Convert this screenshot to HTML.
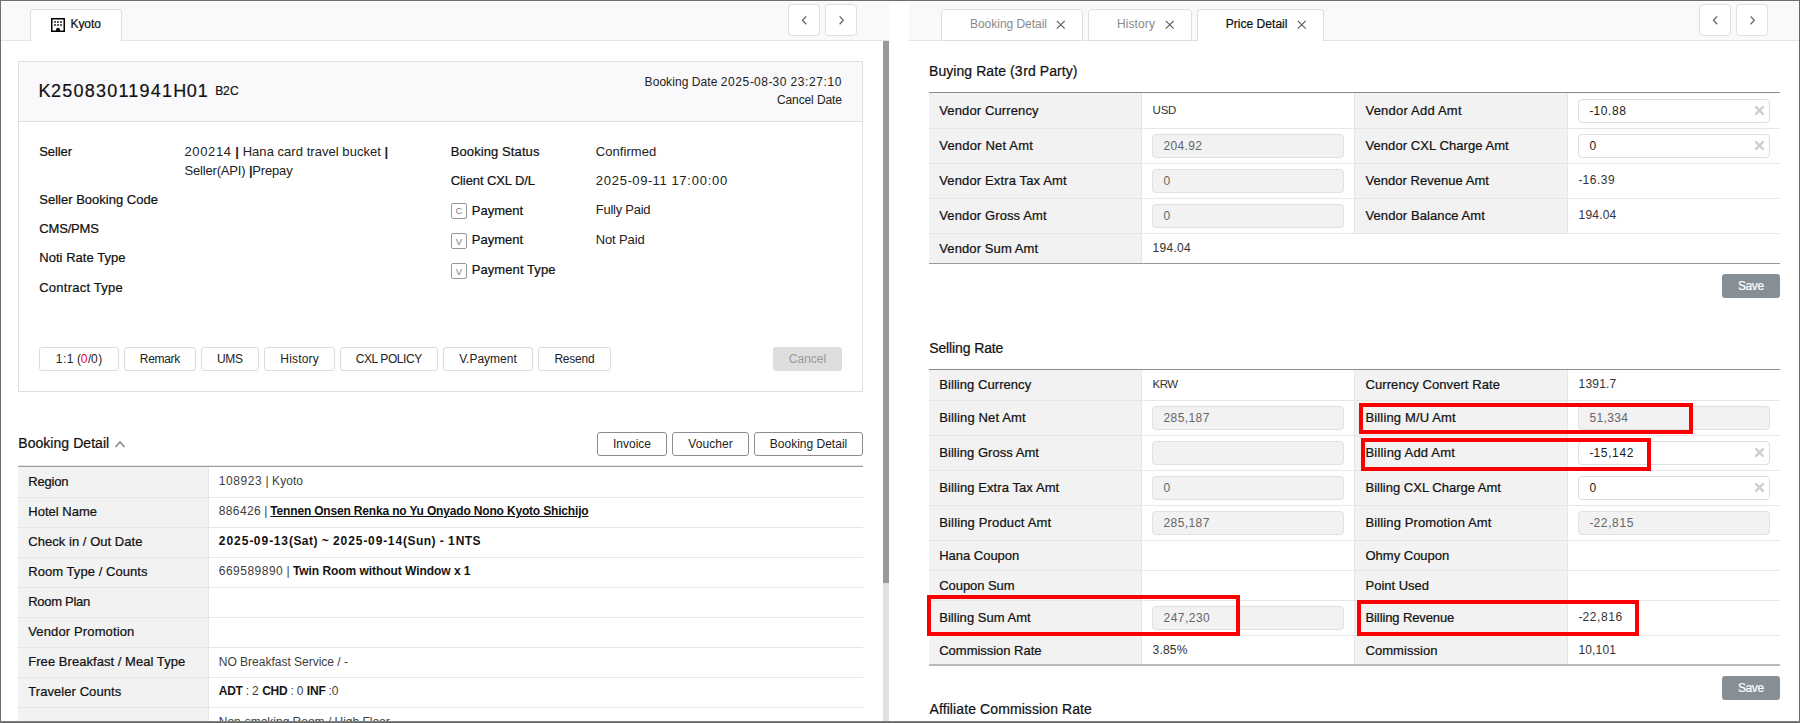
<!DOCTYPE html>
<html lang="en"><head><meta charset="utf-8"><title>Booking - Price Detail</title>
<style>
html,body{margin:0;padding:0}
body{width:1800px;height:723px;overflow:hidden;background:#fff;position:relative;font-family:"Liberation Sans",sans-serif;}
#app{position:absolute;left:0;top:0;width:1800px;height:723px;overflow:hidden;background:#fff}
#app div,#app svg.ab{position:absolute;display:block}
#app div.bx{box-sizing:border-box}
#app .t{position:absolute;white-space:nowrap;line-height:20px;height:20px}
#app .m{-webkit-text-stroke:0.22px currentColor}
#app .t{--ls:0px;letter-spacing:var(--ls)}
#app .t i{font-style:normal;letter-spacing:calc(var(--ls) + 0.045em)}
#app b{font-weight:700}
#app b.k{color:#151515}
#app b.u{text-decoration:underline;color:#111}
</style></head><body>
<div id="app">
<div class="bx" style="left:1px;top:2px;width:888px;height:39px;background:#f9f8fa;border-bottom:1px solid #e3e3e3"></div>
<div class="bx" style="left:909px;top:2px;width:890px;height:39px;background:#f9f8fa;border-bottom:1px solid #e3e3e3"></div>
<div class="bx" style="left:30px;top:9px;width:92px;height:32px;background:#fff;border:1px solid #dedede;border-bottom:none;border-radius:4px 4px 0 0"></div>
<svg class="ab" style="left:51px;top:18px" width="14" height="14" viewBox="0 0 14 14">
<rect x="0.75" y="0.75" width="12.5" height="12.5" fill="#fff" stroke="#000" stroke-width="1.5"/>
<g fill="#000"><rect x="3.2" y="3.2" width="1.6" height="1.6"/><rect x="6.2" y="3.2" width="1.6" height="1.6"/><rect x="9.2" y="3.2" width="1.6" height="1.6"/>
<rect x="3.2" y="6.2" width="1.6" height="1.6"/><rect x="6.2" y="6.2" width="1.6" height="1.6"/><rect x="9.2" y="6.2" width="1.6" height="1.6"/>
<path d="M5.1 13 V11.7 a1.9 1.9 0 0 1 3.8 0 V13 Z"/></g></svg>
<div class="bx" style="left:788px;top:4px;width:32px;height:32px;background:#fff;border:1px solid #dfdfdf;border-radius:4px"><svg class="ab" style="left:11px;top:9.5px" width="9" height="11" viewBox="0 0 9 11"><path d="M6.2 1.4 L2.5 5.3 L6.2 9.2" fill="none" stroke="#666" stroke-width="1.3"/></svg></div>
<div class="bx" style="left:825px;top:4px;width:32px;height:32px;background:#fff;border:1px solid #dfdfdf;border-radius:4px"><svg class="ab" style="left:11px;top:9.5px" width="9" height="11" viewBox="0 0 9 11"><path d="M2.6 1.4 L6.3 5.3 L2.6 9.2" fill="none" stroke="#666" stroke-width="1.3"/></svg></div>
<div class="bx" style="left:1699px;top:4px;width:32px;height:32px;background:#fff;border:1px solid #dfdfdf;border-radius:4px"><svg class="ab" style="left:11px;top:9.5px" width="9" height="11" viewBox="0 0 9 11"><path d="M6.2 1.4 L2.5 5.3 L6.2 9.2" fill="none" stroke="#666" stroke-width="1.3"/></svg></div>
<div class="bx" style="left:1736px;top:4px;width:32px;height:32px;background:#fff;border:1px solid #dfdfdf;border-radius:4px"><svg class="ab" style="left:11px;top:9.5px" width="9" height="11" viewBox="0 0 9 11"><path d="M2.6 1.4 L6.3 5.3 L2.6 9.2" fill="none" stroke="#666" stroke-width="1.3"/></svg></div>
<div class="" style="left:883px;top:41px;width:6px;height:542px;background:#999"></div>
<div class="" style="left:883px;top:583px;width:6px;height:140px;background:#e0e0e0"></div>
<div class="bx" style="left:18px;top:61px;width:845px;height:331px;background:#fff;border:1px solid #dfdfdf"></div>
<div class="bx" style="left:19px;top:62px;width:843px;height:60px;background:#f9f8fa;border-bottom:1px solid #dfdfdf"></div>
<div class="bx" style="left:451px;top:203px;width:16px;height:16px;background:#fff;border:1px solid #999;border-radius:2px"></div>
<div class="bx" style="left:451px;top:233px;width:16px;height:16px;background:#fff;border:1px solid #999;border-radius:2px"></div>
<div class="bx" style="left:451px;top:263px;width:16px;height:16px;background:#fff;border:1px solid #999;border-radius:2px"></div>
<div class="bx" style="left:39px;top:347px;width:80px;height:24px;background:#fff;border:1px solid #dcdcdc;border-radius:3px"></div>
<div class="bx" style="left:124px;top:347px;width:72px;height:24px;background:#fff;border:1px solid #dcdcdc;border-radius:3px"></div>
<div class="bx" style="left:201px;top:347px;width:58px;height:24px;background:#fff;border:1px solid #dcdcdc;border-radius:3px"></div>
<div class="bx" style="left:264px;top:347px;width:71px;height:24px;background:#fff;border:1px solid #dcdcdc;border-radius:3px"></div>
<div class="bx" style="left:340px;top:347px;width:98px;height:24px;background:#fff;border:1px solid #dcdcdc;border-radius:3px"></div>
<div class="bx" style="left:443px;top:347px;width:90px;height:24px;background:#fff;border:1px solid #dcdcdc;border-radius:3px"></div>
<div class="bx" style="left:538px;top:347px;width:73px;height:24px;background:#fff;border:1px solid #dcdcdc;border-radius:3px"></div>
<div class="bx" style="left:773px;top:347px;width:69px;height:24px;background:#dedede;border-radius:3px"></div>
<svg class="ab" style="left:114px;top:439px" width="12" height="10" viewBox="0 0 12 10"><path d="M1.5 8 L6 3 L10.5 8" fill="none" stroke="#8a8a8a" stroke-width="1.6"/></svg>
<div class="bx" style="left:597px;top:432px;width:70px;height:24px;background:#fff;border:1px solid #8e8e8e;border-radius:3px"></div>
<div class="bx" style="left:672px;top:432px;width:77px;height:24px;background:#fff;border:1px solid #8e8e8e;border-radius:3px"></div>
<div class="bx" style="left:754px;top:432px;width:109px;height:24px;background:#fff;border:1px solid #8e8e8e;border-radius:3px"></div>
<div class="" style="left:18px;top:465px;width:845px;height:1px;background:#e4e4e4"></div>
<div class="" style="left:18px;top:466px;width:845px;height:1px;background:#9d9d9d"></div>
<div class="" style="left:18px;top:467px;width:190px;height:256px;background:#f2f2f2"></div>
<div class="" style="left:208px;top:467px;width:1px;height:256px;background:#e6e6e6"></div>
<div class="" style="left:18px;top:497px;width:845px;height:1px;background:#e6e6e6"></div>
<div class="" style="left:18px;top:527px;width:845px;height:1px;background:#e6e6e6"></div>
<div class="" style="left:18px;top:557px;width:845px;height:1px;background:#e6e6e6"></div>
<div class="" style="left:18px;top:587px;width:845px;height:1px;background:#e6e6e6"></div>
<div class="" style="left:18px;top:617px;width:845px;height:1px;background:#e6e6e6"></div>
<div class="" style="left:18px;top:647px;width:845px;height:1px;background:#e6e6e6"></div>
<div class="" style="left:18px;top:677px;width:845px;height:1px;background:#e6e6e6"></div>
<div class="" style="left:18px;top:707px;width:845px;height:1px;background:#e6e6e6"></div>
<div class="bx" style="left:941px;top:9px;width:142px;height:32px;background:#fff;border:1px solid #dedede;border-radius:4px 4px 0 0"></div>
<div class="bx" style="left:1088px;top:9px;width:104px;height:32px;background:#fff;border:1px solid #dedede;border-radius:4px 4px 0 0"></div>
<div class="bx" style="left:1197px;top:9px;width:127px;height:32px;background:#fff;border:1px solid #dedede;border-radius:4px 4px 0 0;border-bottom:none"></div>
<svg class="ab" style="left:1056.25px;top:20.25px" width="9.5" height="9.5" viewBox="0 0 9.5 9.5"><path d="M0.8 0.8 L8.7 8.7 M8.7 0.8 L0.8 8.7" fill="none" stroke="#555" stroke-width="1.05"/></svg>
<svg class="ab" style="left:1165.25px;top:20.25px" width="9.5" height="9.5" viewBox="0 0 9.5 9.5"><path d="M0.8 0.8 L8.7 8.7 M8.7 0.8 L0.8 8.7" fill="none" stroke="#555" stroke-width="1.05"/></svg>
<svg class="ab" style="left:1297.25px;top:20.25px" width="9.5" height="9.5" viewBox="0 0 9.5 9.5"><path d="M0.8 0.8 L8.7 8.7 M8.7 0.8 L0.8 8.7" fill="none" stroke="#555" stroke-width="1.05"/></svg>
<div class="" style="left:929px;top:92px;width:851px;height:1px;background:#8b8b8b"></div>
<div class="" style="left:929px;top:93px;width:212px;height:35px;background:#f2f2f2"></div>
<div class="" style="left:1141px;top:93px;width:1px;height:35px;background:#e6e6e6"></div>
<div class="" style="left:1355px;top:93px;width:212px;height:35px;background:#f2f2f2"></div>
<div class="" style="left:1567px;top:93px;width:1px;height:35px;background:#e6e6e6"></div>
<div class="" style="left:1354px;top:93px;width:1px;height:35px;background:#e6e6e6"></div>
<div class="bx" style="left:1578px;top:98.5px;width:192px;height:24.0px;background:#fff;border:1px solid #dedede;border-radius:4px"></div>
<svg class="ab" style="left:1753.6px;top:104.8px" width="11" height="11" viewBox="0 0 11 11"><path d="M1.4 1.4 L9.6 9.6 M9.6 1.4 L1.4 9.6" fill="none" stroke="#cdcdcd" stroke-width="2.2"/></svg>
<div class="" style="left:929px;top:128px;width:851px;height:1px;background:#e6e6e6"></div>
<div class="" style="left:929px;top:129px;width:212px;height:34px;background:#f2f2f2"></div>
<div class="" style="left:1141px;top:129px;width:1px;height:34px;background:#e6e6e6"></div>
<div class="bx" style="left:1152px;top:134.0px;width:192px;height:24.0px;background:#f2f2f2;border:1px solid #e0e0e0;border-radius:4px"></div>
<div class="" style="left:1355px;top:129px;width:212px;height:34px;background:#f2f2f2"></div>
<div class="" style="left:1567px;top:129px;width:1px;height:34px;background:#e6e6e6"></div>
<div class="" style="left:1354px;top:129px;width:1px;height:34px;background:#e6e6e6"></div>
<div class="bx" style="left:1578px;top:134.0px;width:192px;height:24.0px;background:#fff;border:1px solid #dedede;border-radius:4px"></div>
<svg class="ab" style="left:1753.6px;top:140.3px" width="11" height="11" viewBox="0 0 11 11"><path d="M1.4 1.4 L9.6 9.6 M9.6 1.4 L1.4 9.6" fill="none" stroke="#cdcdcd" stroke-width="2.2"/></svg>
<div class="" style="left:929px;top:163px;width:851px;height:1px;background:#e6e6e6"></div>
<div class="" style="left:929px;top:164px;width:212px;height:34px;background:#f2f2f2"></div>
<div class="" style="left:1141px;top:164px;width:1px;height:34px;background:#e6e6e6"></div>
<div class="bx" style="left:1152px;top:169.0px;width:192px;height:24.0px;background:#f2f2f2;border:1px solid #e0e0e0;border-radius:4px"></div>
<div class="" style="left:1355px;top:164px;width:212px;height:34px;background:#f2f2f2"></div>
<div class="" style="left:1567px;top:164px;width:1px;height:34px;background:#e6e6e6"></div>
<div class="" style="left:1354px;top:164px;width:1px;height:34px;background:#e6e6e6"></div>
<div class="" style="left:929px;top:198px;width:851px;height:1px;background:#e6e6e6"></div>
<div class="" style="left:929px;top:199px;width:212px;height:34px;background:#f2f2f2"></div>
<div class="" style="left:1141px;top:199px;width:1px;height:34px;background:#e6e6e6"></div>
<div class="bx" style="left:1152px;top:204.0px;width:192px;height:24.0px;background:#f2f2f2;border:1px solid #e0e0e0;border-radius:4px"></div>
<div class="" style="left:1355px;top:199px;width:212px;height:34px;background:#f2f2f2"></div>
<div class="" style="left:1567px;top:199px;width:1px;height:34px;background:#e6e6e6"></div>
<div class="" style="left:1354px;top:199px;width:1px;height:34px;background:#e6e6e6"></div>
<div class="" style="left:929px;top:233px;width:851px;height:1px;background:#e6e6e6"></div>
<div class="" style="left:929px;top:234px;width:212px;height:29px;background:#f2f2f2"></div>
<div class="" style="left:1141px;top:234px;width:1px;height:29px;background:#e6e6e6"></div>
<div class="" style="left:929px;top:263px;width:851px;height:1px;background:#999"></div>
<div class="bx" style="left:1722px;top:274px;width:58px;height:24px;background:#868e96;border-radius:3px"></div>
<div class="" style="left:929px;top:369px;width:851px;height:1px;background:#8b8b8b"></div>
<div class="" style="left:929px;top:370px;width:212px;height:30px;background:#f2f2f2"></div>
<div class="" style="left:1141px;top:370px;width:1px;height:30px;background:#e6e6e6"></div>
<div class="" style="left:1355px;top:370px;width:212px;height:30px;background:#f2f2f2"></div>
<div class="" style="left:1567px;top:370px;width:1px;height:30px;background:#e6e6e6"></div>
<div class="" style="left:1354px;top:370px;width:1px;height:30px;background:#e6e6e6"></div>
<div class="" style="left:929px;top:400px;width:851px;height:1px;background:#e6e6e6"></div>
<div class="" style="left:929px;top:401px;width:212px;height:34px;background:#f2f2f2"></div>
<div class="" style="left:1141px;top:401px;width:1px;height:34px;background:#e6e6e6"></div>
<div class="bx" style="left:1152px;top:406.0px;width:192px;height:24.0px;background:#f2f2f2;border:1px solid #e0e0e0;border-radius:4px"></div>
<div class="" style="left:1355px;top:401px;width:212px;height:34px;background:#f2f2f2"></div>
<div class="" style="left:1567px;top:401px;width:1px;height:34px;background:#e6e6e6"></div>
<div class="" style="left:1354px;top:401px;width:1px;height:34px;background:#e6e6e6"></div>
<div class="bx" style="left:1578px;top:406.0px;width:192px;height:24.0px;background:#f2f2f2;border:1px solid #e0e0e0;border-radius:4px"></div>
<div class="" style="left:929px;top:435px;width:851px;height:1px;background:#e6e6e6"></div>
<div class="" style="left:929px;top:436px;width:212px;height:34px;background:#f2f2f2"></div>
<div class="" style="left:1141px;top:436px;width:1px;height:34px;background:#e6e6e6"></div>
<div class="bx" style="left:1152px;top:441.0px;width:192px;height:24.0px;background:#f2f2f2;border:1px solid #e0e0e0;border-radius:4px"></div>
<div class="" style="left:1355px;top:436px;width:212px;height:34px;background:#f2f2f2"></div>
<div class="" style="left:1567px;top:436px;width:1px;height:34px;background:#e6e6e6"></div>
<div class="" style="left:1354px;top:436px;width:1px;height:34px;background:#e6e6e6"></div>
<div class="bx" style="left:1578px;top:441.0px;width:192px;height:24.0px;background:#fff;border:1px solid #dedede;border-radius:4px"></div>
<svg class="ab" style="left:1753.6px;top:447.3px" width="11" height="11" viewBox="0 0 11 11"><path d="M1.4 1.4 L9.6 9.6 M9.6 1.4 L1.4 9.6" fill="none" stroke="#cdcdcd" stroke-width="2.2"/></svg>
<div class="" style="left:929px;top:470px;width:851px;height:1px;background:#e6e6e6"></div>
<div class="" style="left:929px;top:471px;width:212px;height:34px;background:#f2f2f2"></div>
<div class="" style="left:1141px;top:471px;width:1px;height:34px;background:#e6e6e6"></div>
<div class="bx" style="left:1152px;top:476.0px;width:192px;height:24.0px;background:#f2f2f2;border:1px solid #e0e0e0;border-radius:4px"></div>
<div class="" style="left:1355px;top:471px;width:212px;height:34px;background:#f2f2f2"></div>
<div class="" style="left:1567px;top:471px;width:1px;height:34px;background:#e6e6e6"></div>
<div class="" style="left:1354px;top:471px;width:1px;height:34px;background:#e6e6e6"></div>
<div class="bx" style="left:1578px;top:476.0px;width:192px;height:24.0px;background:#fff;border:1px solid #dedede;border-radius:4px"></div>
<svg class="ab" style="left:1753.6px;top:482.3px" width="11" height="11" viewBox="0 0 11 11"><path d="M1.4 1.4 L9.6 9.6 M9.6 1.4 L1.4 9.6" fill="none" stroke="#cdcdcd" stroke-width="2.2"/></svg>
<div class="" style="left:929px;top:505px;width:851px;height:1px;background:#e6e6e6"></div>
<div class="" style="left:929px;top:506px;width:212px;height:34px;background:#f2f2f2"></div>
<div class="" style="left:1141px;top:506px;width:1px;height:34px;background:#e6e6e6"></div>
<div class="bx" style="left:1152px;top:511.0px;width:192px;height:24.0px;background:#f2f2f2;border:1px solid #e0e0e0;border-radius:4px"></div>
<div class="" style="left:1355px;top:506px;width:212px;height:34px;background:#f2f2f2"></div>
<div class="" style="left:1567px;top:506px;width:1px;height:34px;background:#e6e6e6"></div>
<div class="" style="left:1354px;top:506px;width:1px;height:34px;background:#e6e6e6"></div>
<div class="bx" style="left:1578px;top:511.0px;width:192px;height:24.0px;background:#f2f2f2;border:1px solid #e0e0e0;border-radius:4px"></div>
<div class="" style="left:929px;top:540px;width:851px;height:1px;background:#e6e6e6"></div>
<div class="" style="left:929px;top:541px;width:212px;height:29px;background:#f2f2f2"></div>
<div class="" style="left:1141px;top:541px;width:1px;height:29px;background:#e6e6e6"></div>
<div class="" style="left:1355px;top:541px;width:212px;height:29px;background:#f2f2f2"></div>
<div class="" style="left:1567px;top:541px;width:1px;height:29px;background:#e6e6e6"></div>
<div class="" style="left:1354px;top:541px;width:1px;height:29px;background:#e6e6e6"></div>
<div class="" style="left:929px;top:570px;width:851px;height:1px;background:#e6e6e6"></div>
<div class="" style="left:929px;top:571px;width:212px;height:29px;background:#f2f2f2"></div>
<div class="" style="left:1141px;top:571px;width:1px;height:29px;background:#e6e6e6"></div>
<div class="" style="left:1355px;top:571px;width:212px;height:29px;background:#f2f2f2"></div>
<div class="" style="left:1567px;top:571px;width:1px;height:29px;background:#e6e6e6"></div>
<div class="" style="left:1354px;top:571px;width:1px;height:29px;background:#e6e6e6"></div>
<div class="" style="left:929px;top:600px;width:851px;height:1px;background:#e6e6e6"></div>
<div class="" style="left:929px;top:601px;width:212px;height:34px;background:#f2f2f2"></div>
<div class="" style="left:1141px;top:601px;width:1px;height:34px;background:#e6e6e6"></div>
<div class="bx" style="left:1152px;top:606.0px;width:192px;height:24.0px;background:#f2f2f2;border:1px solid #e0e0e0;border-radius:4px"></div>
<div class="" style="left:1355px;top:601px;width:212px;height:34px;background:#f2f2f2"></div>
<div class="" style="left:1567px;top:601px;width:1px;height:34px;background:#e6e6e6"></div>
<div class="" style="left:1354px;top:601px;width:1px;height:34px;background:#e6e6e6"></div>
<div class="" style="left:929px;top:635px;width:851px;height:1px;background:#e6e6e6"></div>
<div class="" style="left:929px;top:636px;width:212px;height:29px;background:#f2f2f2"></div>
<div class="" style="left:1141px;top:636px;width:1px;height:29px;background:#e6e6e6"></div>
<div class="" style="left:1355px;top:636px;width:212px;height:29px;background:#f2f2f2"></div>
<div class="" style="left:1567px;top:636px;width:1px;height:29px;background:#e6e6e6"></div>
<div class="" style="left:1354px;top:636px;width:1px;height:29px;background:#e6e6e6"></div>
<div class="" style="left:929px;top:664px;width:851px;height:2px;background:#bababa"></div>
<div class="bx" style="left:1722px;top:676px;width:58px;height:24px;background:#868e96;border-radius:3px"></div>
<span class="t m" style="top:13.84px;font-size:12px;color:#111;--ls:-0.017px;left:70.40px;"><span>Kyoto</span></span>
<span class="t" style="top:80.76px;font-size:18px;color:#111;--ls:0.408px;left:38.60px;-webkit-text-stroke:0.2px currentColor;"><span>K<i>25083011941</i>H<i>01</i></span></span>
<span class="t m" style="top:81.34px;font-size:12px;color:#111;--ls:-0.219px;left:215.30px;"><span>B<i>2</i>C</span></span>
<span class="t" style="top:71.84px;font-size:12px;color:#222;--ls:0.062px;right:957.94px;"><span>Booking Date <i>2025</i>-<i>08</i>-<i>30</i> <i>23:27:10</i></span></span>
<span class="t" style="top:89.84px;font-size:12px;color:#222;--ls:-0.095px;right:958.10px;"><span>Cancel Date</span></span>
<span class="t m" style="top:141.50px;font-size:13px;color:#111;--ls:-0.083px;left:39.25px;"><span>Seller</span></span>
<span class="t" style="top:141.50px;font-size:13px;color:#222;--ls:0.042px;left:184.50px;"><span><i>200214</i> <b>|</b> Hana card travel bucket <b>|</b></span></span>
<span class="t" style="top:160.50px;font-size:13px;color:#222;--ls:-0.174px;left:184.50px;"><span>Seller(API) <b>|</b>Prepay</span></span>
<span class="t m" style="top:190.00px;font-size:13px;color:#111;--ls:0.012px;left:39.25px;"><span>Seller Booking Code</span></span>
<span class="t m" style="top:218.75px;font-size:13px;color:#111;--ls:-0.167px;left:39.25px;"><span>CMS/PMS</span></span>
<span class="t m" style="top:248.00px;font-size:13px;color:#111;--ls:0.035px;left:39.25px;"><span>Noti Rate Type</span></span>
<span class="t m" style="top:278.00px;font-size:13px;color:#111;--ls:0.234px;left:39.25px;"><span>Contract Type</span></span>
<span class="t m" style="top:141.50px;font-size:13px;color:#111;--ls:0.093px;left:450.75px;"><span>Booking Status</span></span>
<span class="t" style="top:141.50px;font-size:13px;color:#222;--ls:0.059px;left:595.75px;"><span>Confirmed</span></span>
<span class="t m" style="top:170.50px;font-size:13px;color:#111;--ls:-0.089px;left:450.75px;"><span>Client CXL D/L</span></span>
<span class="t" style="top:170.50px;font-size:13px;color:#222;--ls:0.161px;left:595.75px;"><span><i>2025</i>-<i>09</i>-<i>11</i> <i>17:00:00</i></span></span>
<span class="t" style="top:201.31px;font-size:9.5px;color:#808080;left:309.00px;width:300px;text-align:center;"><span>C</span></span>
<span class="t m" style="top:200.50px;font-size:13px;color:#111;--ls:0.027px;left:471.75px;"><span>Payment</span></span>
<span class="t" style="top:199.50px;font-size:13px;color:#222;--ls:-0.258px;left:595.75px;"><span>Fully Paid</span></span>
<span class="t" style="top:232.31px;font-size:9.5px;color:#808080;left:309.00px;width:300px;text-align:center;"><span>V</span></span>
<span class="t m" style="top:230.10px;font-size:13px;color:#111;--ls:0.027px;left:471.75px;"><span>Payment</span></span>
<span class="t" style="top:229.50px;font-size:13px;color:#222;--ls:-0.141px;left:595.75px;"><span>Not Paid</span></span>
<span class="t" style="top:262.31px;font-size:9.5px;color:#808080;left:309.00px;width:300px;text-align:center;"><span>V</span></span>
<span class="t m" style="top:259.70px;font-size:13px;color:#111;--ls:0.073px;left:471.75px;"><span>Payment Type</span></span>
<span class="t" style="top:348.84px;font-size:12px;color:#222;--ls:-0.132px;left:-71.07px;width:300px;text-align:center;"><span><i>1:1</i> (<span style="color:#e03"><i>0</i></span>/<i>0</i>)</span></span>
<span class="t" style="top:348.84px;font-size:12px;color:#222;--ls:-0.336px;left:9.83px;width:300px;text-align:center;"><span>Remark</span></span>
<span class="t" style="top:348.84px;font-size:12px;color:#222;--ls:-0.307px;left:79.85px;width:300px;text-align:center;"><span>UMS</span></span>
<span class="t" style="top:348.84px;font-size:12px;color:#222;--ls:0.165px;left:149.58px;width:300px;text-align:center;"><span>History</span></span>
<span class="t" style="top:348.84px;font-size:12px;color:#222;--ls:-0.425px;left:238.79px;width:300px;text-align:center;"><span>CXL POLICY</span></span>
<span class="t" style="top:348.84px;font-size:12px;color:#222;--ls:-0.010px;left:337.99px;width:300px;text-align:center;"><span>V.Payment</span></span>
<span class="t" style="top:348.84px;font-size:12px;color:#222;--ls:-0.229px;left:424.39px;width:300px;text-align:center;"><span>Resend</span></span>
<span class="t" style="top:348.84px;font-size:12px;color:#999;--ls:0.023px;left:657.51px;width:300px;text-align:center;"><span>Cancel</span></span>
<span class="t m" style="top:433.15px;font-size:14px;color:#111;--ls:0.051px;left:18.25px;"><span>Booking Detail</span></span>
<span class="t" style="top:433.84px;font-size:12px;color:#222;left:482.00px;width:300px;text-align:center;"><span>Invoice</span></span>
<span class="t" style="top:433.84px;font-size:12px;color:#222;--ls:0.065px;left:560.53px;width:300px;text-align:center;"><span>Voucher</span></span>
<span class="t" style="top:433.84px;font-size:12px;color:#222;--ls:0.008px;left:658.50px;width:300px;text-align:center;"><span>Booking Detail</span></span>
<span class="t m" style="top:472.00px;font-size:13px;color:#111;--ls:-0.201px;left:28.25px;"><span>Region</span></span>
<span class="t m" style="top:502.00px;font-size:13px;color:#111;--ls:0.011px;left:28.25px;"><span>Hotel Name</span></span>
<span class="t m" style="top:532.00px;font-size:13px;color:#111;--ls:0.042px;left:28.25px;"><span>Check in / Out Date</span></span>
<span class="t m" style="top:562.00px;font-size:13px;color:#111;--ls:0.055px;left:28.25px;"><span>Room Type / Counts</span></span>
<span class="t m" style="top:592.00px;font-size:13px;color:#111;--ls:-0.285px;left:28.25px;"><span>Room Plan</span></span>
<span class="t m" style="top:622.00px;font-size:13px;color:#111;--ls:0.136px;left:28.25px;"><span>Vendor Promotion</span></span>
<span class="t m" style="top:652.00px;font-size:13px;color:#111;--ls:0.044px;left:28.25px;"><span>Free Breakfast / Meal Type</span></span>
<span class="t m" style="top:682.00px;font-size:13px;color:#111;--ls:0.067px;left:28.25px;"><span>Traveler Counts</span></span>
<span class="t" style="top:470.84px;font-size:12px;color:#3d3d3d;--ls:0.033px;left:218.75px;"><span><i>108923</i> | Kyoto</span></span>
<span class="t" style="top:501.34px;font-size:12px;color:#3d3d3d;--ls:-0.171px;left:218.75px;"><span><i>886426</i> | <b class="u">Tennen Onsen Renka no Yu Onyado Nono Kyoto Shichijo</b></span></span>
<span class="t" style="top:531.34px;font-size:12px;color:#111;--ls:0.447px;left:218.75px;"><span><b><i>2025</i>-<i>09</i>-<i>13</i>(Sat) ~ <i>2025</i>-<i>09</i>-<i>14</i>(Sun) - <i>1</i>NTS</b></span></span>
<span class="t" style="top:561.34px;font-size:12px;color:#3d3d3d;--ls:-0.050px;left:218.75px;"><span><i>669589890</i> | <b class="k">Twin Room without Window x <i>1</i></b></span></span>
<span class="t" style="top:651.84px;font-size:12px;color:#3d3d3d;--ls:-0.005px;left:218.75px;"><span>NO Breakfast Service / -</span></span>
<span class="t" style="top:681.34px;font-size:12px;color:#3d3d3d;--ls:-0.230px;left:218.75px;"><span><b class="k">ADT</b> : <i>2</i> <b class="k">CHD</b> : <i>0</i> <b class="k">INF</b> :<i>0</i></span></span>
<span class="t" style="top:711.84px;font-size:12px;color:#3d3d3d;--ls:-0.014px;left:218.75px;"><span>Non-smoking Room / High Floor</span></span>
<span class="t" style="top:14.09px;font-size:12px;color:#8a8a8a;--ls:-0.028px;left:970.00px;"><span>Booking Detail</span></span>
<span class="t" style="top:14.09px;font-size:12px;color:#8a8a8a;--ls:0.094px;left:1117.00px;"><span>History</span></span>
<span class="t m" style="top:14.09px;font-size:12px;color:#111;--ls:0.033px;left:1225.75px;"><span>Price Detail</span></span>
<span class="t m" style="top:61.40px;font-size:14px;color:#111;--ls:0.068px;left:929.00px;"><span>Buying Rate (<i>3</i>rd Party)</span></span>
<span class="t m" style="top:100.50px;font-size:13px;color:#111;--ls:0.129px;left:939.25px;"><span>Vendor Currency</span></span>
<span class="t" style="top:99.82px;font-size:11.5px;color:#333;--ls:-0.177px;left:1152.50px;"><span>USD</span></span>
<span class="t m" style="top:100.50px;font-size:13px;color:#111;--ls:0.215px;left:1365.50px;"><span>Vendor Add Amt</span></span>
<span class="t" style="top:100.84px;font-size:12px;color:#222;--ls:0.044px;left:1589.50px;"><span>-<i>10.88</i></span></span>
<span class="t m" style="top:136.00px;font-size:13px;color:#111;--ls:0.192px;left:939.25px;"><span>Vendor Net Amt</span></span>
<span class="t" style="top:136.34px;font-size:12px;color:#666;--ls:-0.201px;left:1163.50px;"><span><i>204.92</i></span></span>
<span class="t m" style="top:136.00px;font-size:13px;color:#111;--ls:0.065px;left:1365.50px;"><span>Vendor CXL Charge Amt</span></span>
<span class="t" style="top:136.34px;font-size:12px;color:#222;left:1589.50px;"><span><i>0</i></span></span>
<span class="t m" style="top:171.00px;font-size:13px;color:#111;--ls:0.136px;left:939.25px;"><span>Vendor Extra Tax Amt</span></span>
<span class="t" style="top:171.34px;font-size:12px;color:#666;left:1163.50px;"><span><i>0</i></span></span>
<span class="t m" style="top:171.00px;font-size:13px;color:#111;--ls:0.036px;left:1365.50px;"><span>Vendor Revenue Amt</span></span>
<span class="t" style="top:170.34px;font-size:12px;color:#333;left:1578.50px;"><span>-<i>16.39</i></span></span>
<span class="t m" style="top:206.00px;font-size:13px;color:#111;--ls:0.125px;left:939.25px;"><span>Vendor Gross Amt</span></span>
<span class="t" style="top:206.34px;font-size:12px;color:#666;left:1163.50px;"><span><i>0</i></span></span>
<span class="t m" style="top:206.00px;font-size:13px;color:#111;--ls:0.094px;left:1365.50px;"><span>Vendor Balance Amt</span></span>
<span class="t" style="top:205.34px;font-size:12px;color:#333;--ls:-0.326px;left:1578.50px;"><span><i>194.04</i></span></span>
<span class="t m" style="top:238.50px;font-size:13px;color:#111;--ls:0.103px;left:939.25px;"><span>Vendor Sum Amt</span></span>
<span class="t" style="top:237.84px;font-size:12px;color:#333;--ls:-0.242px;left:1152.50px;"><span><i>194.04</i></span></span>
<span class="t m" style="top:275.84px;font-size:12px;color:#fff;--ls:-0.402px;left:1600.80px;width:300px;text-align:center;"><span>Save</span></span>
<span class="t m" style="top:338.40px;font-size:14px;color:#111;--ls:-0.125px;left:929.25px;"><span>Selling Rate</span></span>
<span class="t m" style="top:375.00px;font-size:13px;color:#111;--ls:0.060px;left:939.25px;"><span>Billing Currency</span></span>
<span class="t" style="top:374.32px;font-size:11.5px;color:#333;--ls:-0.542px;left:1152.50px;"><span>KRW</span></span>
<span class="t m" style="top:375.00px;font-size:13px;color:#111;--ls:0.074px;left:1365.50px;"><span>Currency Convert Rate</span></span>
<span class="t" style="top:374.34px;font-size:12px;color:#333;--ls:-0.326px;left:1578.50px;"><span><i>1391.7</i></span></span>
<span class="t m" style="top:408.00px;font-size:13px;color:#111;--ls:0.130px;left:939.25px;"><span>Billing Net Amt</span></span>
<span class="t" style="top:408.34px;font-size:12px;color:#666;--ls:-0.132px;left:1163.50px;"><span><i>285,187</i></span></span>
<span class="t m" style="top:408.00px;font-size:13px;color:#111;--ls:0.141px;left:1365.50px;"><span>Billing M/U Amt</span></span>
<span class="t" style="top:408.34px;font-size:12px;color:#666;--ls:-0.201px;left:1589.50px;"><span><i>51,334</i></span></span>
<span class="t m" style="top:443.00px;font-size:13px;color:#111;--ls:0.045px;left:939.25px;"><span>Billing Gross Amt</span></span>
<span class="t m" style="top:443.00px;font-size:13px;color:#111;--ls:0.185px;left:1365.50px;"><span>Billing Add Amt</span></span>
<span class="t" style="top:443.34px;font-size:12px;color:#222;--ls:0.078px;left:1589.50px;"><span>-<i>15,142</i></span></span>
<span class="t m" style="top:478.00px;font-size:13px;color:#111;--ls:0.083px;left:939.25px;"><span>Billing Extra Tax Amt</span></span>
<span class="t" style="top:478.34px;font-size:12px;color:#666;left:1163.50px;"><span><i>0</i></span></span>
<span class="t m" style="top:478.00px;font-size:13px;color:#111;--ls:0.006px;left:1365.50px;"><span>Billing CXL Charge Amt</span></span>
<span class="t" style="top:478.34px;font-size:12px;color:#222;left:1589.50px;"><span><i>0</i></span></span>
<span class="t m" style="top:513.00px;font-size:13px;color:#111;--ls:0.152px;left:939.25px;"><span>Billing Product Amt</span></span>
<span class="t" style="top:513.34px;font-size:12px;color:#666;--ls:-0.132px;left:1163.50px;"><span><i>285,187</i></span></span>
<span class="t m" style="top:513.00px;font-size:13px;color:#111;--ls:0.116px;left:1365.50px;"><span>Billing Promotion Amt</span></span>
<span class="t" style="top:513.34px;font-size:12px;color:#666;--ls:0.078px;left:1589.50px;"><span>-<i>22,815</i></span></span>
<span class="t m" style="top:545.50px;font-size:13px;color:#111;--ls:-0.021px;left:939.25px;"><span>Hana Coupon</span></span>
<span class="t m" style="top:545.50px;font-size:13px;color:#111;--ls:-0.007px;left:1365.50px;"><span>Ohmy Coupon</span></span>
<span class="t m" style="top:575.50px;font-size:13px;color:#111;--ls:-0.064px;left:939.25px;"><span>Coupon Sum</span></span>
<span class="t m" style="top:575.50px;font-size:13px;color:#111;--ls:-0.009px;left:1365.50px;"><span>Point Used</span></span>
<span class="t m" style="top:608.00px;font-size:13px;color:#111;--ls:0.030px;left:939.25px;"><span>Billing Sum Amt</span></span>
<span class="t" style="top:608.34px;font-size:12px;color:#666;--ls:-0.060px;left:1163.50px;"><span><i>247,230</i></span></span>
<span class="t m" style="top:608.00px;font-size:13px;color:#111;--ls:-0.106px;left:1365.50px;"><span>Billing Revenue</span></span>
<span class="t" style="top:607.34px;font-size:12px;color:#333;--ls:0.042px;left:1578.50px;"><span>-<i>22,816</i></span></span>
<span class="t m" style="top:640.50px;font-size:13px;color:#111;--ls:-0.023px;left:939.25px;"><span>Commission Rate</span></span>
<span class="t" style="top:639.84px;font-size:12px;color:#333;--ls:-0.338px;left:1152.50px;"><span><i>3.85</i>%</span></span>
<span class="t m" style="top:640.50px;font-size:13px;color:#111;--ls:0.048px;left:1365.50px;"><span>Commission</span></span>
<span class="t" style="top:639.84px;font-size:12px;color:#333;--ls:-0.409px;left:1578.50px;"><span><i>10,101</i></span></span>
<span class="t m" style="top:677.84px;font-size:12px;color:#fff;--ls:-0.402px;left:1600.80px;width:300px;text-align:center;"><span>Save</span></span>
<span class="t m" style="top:699.45px;font-size:14px;color:#111;--ls:0.099px;left:929.50px;"><span>Affiliate Commission Rate</span></span>
<div class="bx" style="left:927px;top:595px;width:313px;height:41px;border:4px solid #fb0000"></div>
<div class="bx" style="left:1359px;top:403px;width:334px;height:31px;border:4px solid #fb0000"></div>
<div class="bx" style="left:1361px;top:438px;width:290px;height:33px;border:4px solid #fb0000"></div>
<div class="bx" style="left:1357px;top:600px;width:282px;height:36px;border:4px solid #fb0000"></div>
<div class="" style="left:0px;top:0px;width:1800px;height:1px;background:#6e6e6e"></div>
<div class="" style="left:0px;top:0px;width:1px;height:723px;background:#6e6e6e"></div>
<div class="" style="left:1799px;top:0px;width:1px;height:723px;background:#666"></div>
<div class="" style="left:0px;top:721px;width:1800px;height:2px;background:linear-gradient(#8a8a8a,#5e5e5e)"></div>
</div></body></html>
